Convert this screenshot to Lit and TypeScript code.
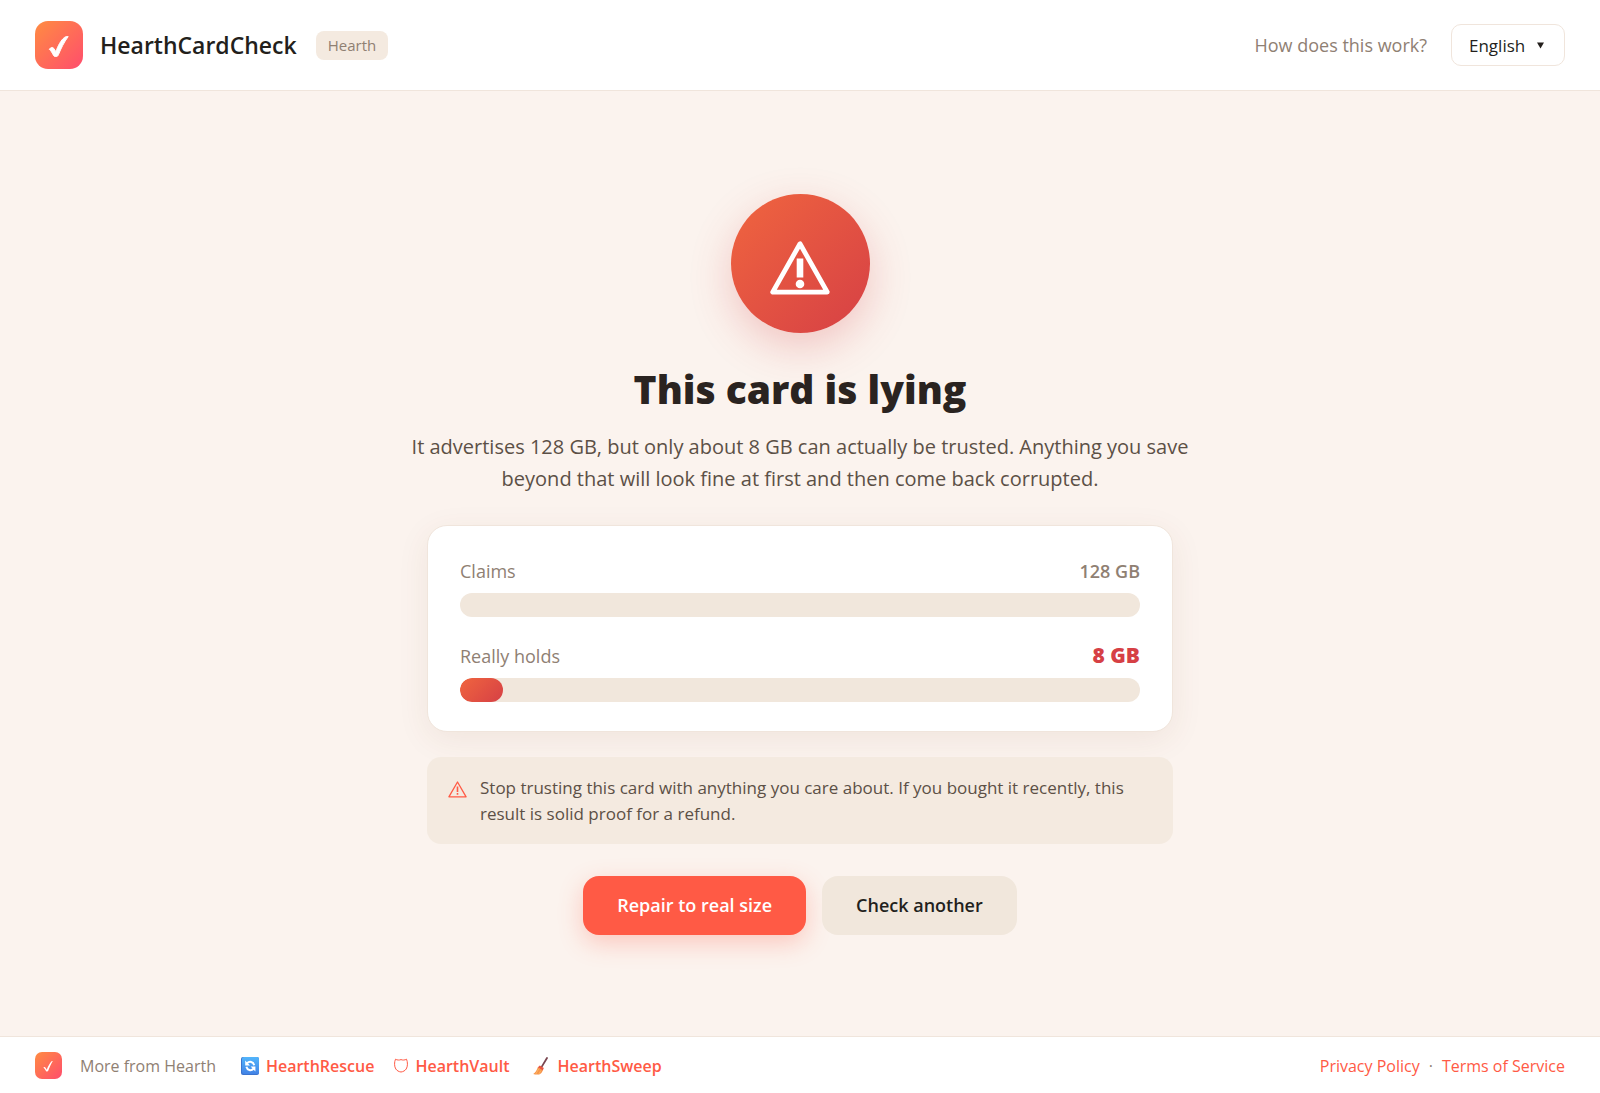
import { LitElement, html, css, svg } from "lit";
import { customElement, property, state } from "lit/decorators.js";
import { classMap } from "lit/directives/class-map.js";

@customElement("brand-mark")
class BrandMark extends LitElement {
  @property({ type: Boolean, reflect: true }) small = false;

  static styles = css`
    :host {
      display: block;
      flex: none;
      width: 48px;
      height: 48px;
      border-radius: 13px;
      background: linear-gradient(135deg, #ff8c42, #ff4d6d);
    }
    :host([small]) {
      width: 27px;
      height: 27px;
      border-radius: 7px;
    }
    svg {
      display: block;
      width: 100%;
      height: 100%;
      fill: #fff;
    }
  `;

  render() {
    return html`<svg viewBox="0 0 48 48" aria-hidden="true">
      ${this.small
        ? svg`<path d="M14.8 27.6c1.4-1.4 3-1.3 3.9.2l2.2 3.8c2.1-5.6 5-11 8-14.5.8-1 1.6-1.3 2.8-1.1-3.2 5.2-6 11.5-8.2 17.5-.6 1.5-3.200 1.600-4 .2-1.300-2.600-2.700-4.600-4.700-6.100z" />`
        : svg`<path d="M14.300 28.300c1.300-2 3.400-2.400 4.500-.9l2 3.300c2.200-5.800 5-11.500 8.600-14.200 1-.8 2.300-1.100 3.800-.9-4.200 5.600-7.300 12-9.700 17.900-.7 1.800-1.300 2-2.700 2-1.500 0-2.100-.4-2.700-1.800-1.100-2.300-2.200-3.900-3.800-5.400z" stroke="#fff" stroke-width="1" stroke-linejoin="round" />`}
    </svg>`;
  }
}

@customElement("capacity-row")
class CapacityRow extends LitElement {
  @property() label = "";
  @property() value = "";
  @property({ type: Number }) percent = 0;
  @property({ type: Boolean }) danger = false;

  static styles = css`
    :host {
      display: block;
    }
    .head {
      display: flex;
      justify-content: space-between;
      align-items: baseline;
      margin-bottom: 6px;
      font-size: 18px;
      line-height: 32px;
      color: #8f8073;
    }
    .value {
      font-weight: 600;
    }
    .value.danger {
      font-size: 21px;
      line-height: 28px;
      font-weight: 800;
      color: #d64045;
    }
    .track {
      height: 24px;
      border-radius: 12px;
      overflow: hidden;
      background: #f1e7dc;
    }
    .fill {
      height: 100%;
      border-radius: 12px;
      background: linear-gradient(135deg, #f0653f, #d64045);
    }
  `;

  render() {
    return html`
      <div class="head">
        <span>${this.label}</span>
        <span class=${classMap({ value: true, danger: this.danger })}>${this.value}</span>
      </div>
      <div class="track">
        ${this.percent ? html`<div class="fill" style="width:${this.percent}%"></div>` : ""}
      </div>
    `;
  }
}

const refreshIcon = html`<svg width="18" height="18" viewBox="0 0 18 18" aria-hidden="true">
  <defs>
    <linearGradient id="tile" x1="0" y1="0" x2="0" y2="1">
      <stop offset="0" stop-color="#52b5fb" />
      <stop offset="1" stop-color="#4283e6" />
    </linearGradient>
  </defs>
  <rect width="18" height="18" rx="2" fill="#3b74cf" />
  <rect x="1" width="17" height="17" rx="2" fill="url(#tile)" />
  <g fill="none" stroke="#fff" stroke-width="2">
    <path d="M6 6.2C8.5 3.8 12.3 4.6 13.2 8.2" />
    <path d="M12.6 11.8C10.1 14.2 6.3 13.4 5.4 9.8" />
  </g>
  <path d="M4.2 3.6v4.8h4.8zM14.4 14.4V9.6H9.6z" fill="#fff" />
</svg>`;

const shieldIcon = html`<svg width="14" height="15" viewBox="0 0 14 15" aria-hidden="true">
  <path
    d="M7 1.6C5.3 2.3 3.2 2.2 1.5 1.2 .2 4 .2 8.6 1.8 11c1.2 1.7 3 2.7 5.2 3 2.2-.3 4-1.3 5.2-3 1.6-2.4 1.6-7 .3-9.8C10.8 2.2 8.7 2.3 7 1.6z"
    fill="none"
    stroke="#ff5a45"
    stroke-width="1"
  />
</svg>`;

const broomIcon = html`<svg width="21" height="18" viewBox="0 0 21 18" aria-hidden="true">
  <path d="M17 1L11.8 9.6" stroke="#7a4650" stroke-width="1.8" stroke-linecap="round" />
  <path d="M9.8 8.6l4 2.5-1.1 2.6-5-3.2z" fill="#e8553f" />
  <path d="M7.9 10.2l4.9 3.3c-.8 2-1.8 3.3-3.6 3.9-2 .4-4 .2-6-.5 2.3-1.4 3.6-3.7 4.7-6.7z" fill="#f7934a" />
  <path d="M8.6 12l-2.8 5M10.8 13.5l-2 3.7" stroke="#fbc06a" stroke-width=".8" />
</svg>`;

@customElement("app-root")
class AppRoot extends LitElement {
  @state() private siblings = [
    { name: "HearthRescue", icon: refreshIcon },
    { name: "HearthVault", icon: shieldIcon },
    { name: "HearthSweep", icon: broomIcon },
  ];

  static styles = css`
    :host {
      display: flex;
      flex-direction: column;
      min-height: 100vh;
      background: #fbf3ee;
      color: #2a2320;
      font-family: "Open Sans", "Noto Sans", sans-serif;
      font-size: 16px;
    }
    * {
      box-sizing: border-box;
    }
    svg {
      display: block;
      flex: none;
    }
    a {
      color: #ff5a45;
      text-decoration: none;
    }
    header {
      display: flex;
      align-items: center;
      justify-content: space-between;
      padding: 21px 35px;
      background: #fff;
      border-bottom: 1px solid #f0e5dc;
    }
    .brand,
    .tools {
      display: flex;
      align-items: center;
    }
    .brand {
      gap: 17px;
    }
    .name {
      margin-right: 2px;
      font-size: 23px;
      font-weight: 600;
      line-height: 32px;
      color: #231f1c;
    }
    .pill {
      padding: 0 12px;
      border-radius: 8px;
      background: #f4eae0;
      color: #8f8073;
      font-size: 15px;
      line-height: 29px;
    }
    .tools {
      gap: 24px;
    }
    .help {
      color: #8f8073;
      font-size: 18px;
      line-height: 28px;
    }
    .language {
      display: grid;
      align-items: center;
    }
    .language select,
    .language svg {
      grid-area: 1 / 1;
    }
    .language svg {
      justify-self: end;
      margin-right: 21px;
      pointer-events: none;
    }
    select {
      appearance: none;
      height: 42px;
      padding: 0 38px 0 17px;
      border: 1px solid #f0e5dc;
      border-radius: 10px;
      background: #fff;
      color: #231f1c;
      font: inherit;
      font-size: 17px;
    }
    main {
      flex: 1;
      display: flex;
      flex-direction: column;
      align-items: center;
      justify-content: center;
      padding: 41px 24px 40px;
    }
    .alert {
      display: grid;
      place-items: center;
      width: 139px;
      height: 139px;
      padding-top: 10px;
      border-radius: 50%;
      background: linear-gradient(135deg, #f0653f, #d64045);
      box-shadow: 0 14px 40px rgba(214, 64, 69, 0.25);
    }
    h1 {
      margin: 30px 0 16px;
      font-size: 39px;
      font-weight: 800;
      line-height: 52px;
      text-align: center;
    }
    .summary {
      max-width: 800px;
      margin: 0 0 30px;
      font-size: 20px;
      line-height: 32px;
      text-align: center;
      color: #5c5046;
    }
    .panel {
      width: 100%;
      max-width: 746px;
    }
    .card {
      display: grid;
      gap: 23px;
      padding: 29px 32px;
      border: 1px solid #f0e5dc;
      border-radius: 20px;
      background: #fff;
      box-shadow: 0 8px 32px rgba(120, 70, 40, 0.08);
    }
    .note {
      display: flex;
      gap: 13px;
      margin-top: 25px;
      padding: 18px 21px 17px;
      border-radius: 14px;
      background: #f4eae0;
      color: #5c5046;
      font-size: 17px;
      line-height: 26px;
    }
    .note svg {
      margin-top: 6px;
    }
    .note p {
      margin: 0;
    }
    .actions {
      display: flex;
      flex-wrap: wrap;
      justify-content: center;
      gap: 16px;
      margin-top: 32px;
    }
    button {
      height: 59px;
      padding: 0 34px;
      border: 0;
      border-radius: 16px;
      background: #f1e7dc;
      color: #231f1c;
      font: inherit;
      font-size: 18px;
      font-weight: 600;
      cursor: pointer;
    }
    button.primary {
      background: #ff5a45;
      color: #fff;
      box-shadow: 0 8px 24px rgba(255, 90, 69, 0.28);
    }
    footer {
      display: flex;
      align-items: center;
      justify-content: space-between;
      padding: 15px 35px 14px;
      background: #fff;
      border-top: 1px solid #f0e5dc;
      color: #8f8073;
      line-height: 24px;
    }
    .more,
    .siblings,
    .siblings a,
    .legal {
      display: flex;
      align-items: center;
    }
    .more {
      gap: 18px;
    }
    .siblings {
      gap: 20px;
      margin-left: 7px;
    }
    .siblings a {
      gap: 7px;
      font-weight: 600;
    }
    .legal {
      gap: 9px;
    }
  `;

  render() {
    return html`
      <header>
        <div class="brand">
          <brand-mark></brand-mark>
          <span class="name">HearthCardCheck</span>
          <span class="pill">Hearth</span>
        </div>
        <div class="tools">
          <a class="help" href="#how">How does this work?</a>
          <div class="language">
            <select aria-label="Language">
              <option>English</option>
            </select>
            <svg width="7" height="7" viewBox="0 0 7 7" aria-hidden="true">
              <path d="M0 .5h7L3.5 6.5z" fill="#231f1c" />
            </svg>
          </div>
        </div>
      </header>

      <main>
        <div class="alert">
          <svg width="60" height="54" viewBox="0 0 60 54" aria-hidden="true">
            <path d="M30 2.8L2.7 51.1H57.3z" fill="none" stroke="#fff" stroke-width="4.8" stroke-linejoin="round" />
            <path d="M26.7 17.5h6.6v19h-6.6z" fill="#fff" />
            <circle cx="30" cy="43" r="4.3" fill="#fff" />
          </svg>
        </div>
        <h1>This card is lying</h1>
        <p class="summary">
          It advertises 128 GB, but only about 8 GB can actually be trusted. Anything you save beyond
          that will look fine at first and then come back corrupted.
        </p>
        <section class="panel card">
          <capacity-row label="Claims" value="128 GB"></capacity-row>
          <capacity-row label="Really holds" value="8 GB" .percent=${(8 / 128) * 100} danger></capacity-row>
        </section>
        <div class="panel note">
          <svg width="19" height="17" viewBox="0 0 19 17" aria-hidden="true">
            <path d="M9.5 1L.9 15.8H18.1z" fill="none" stroke="#ff5a45" stroke-width="1.3" stroke-linejoin="round" />
            <path d="M8.7 5.5h1.6v5.5H8.7zM8.7 12h1.6v1.8H8.7z" fill="#ff5a45" />
          </svg>
          <p>
            Stop trusting this card with anything you care about. If you bought it recently, this
            result is solid proof for a refund.
          </p>
        </div>
        <div class="actions">
          <button class="primary" type="button">Repair to real size</button>
          <button type="button">Check another</button>
        </div>
      </main>

      <footer>
        <div class="more">
          <brand-mark small></brand-mark>
          <span>More from Hearth</span>
          <nav class="siblings" aria-label="More apps">
            ${this.siblings.map((s) => html`<a href="#${s.name}">${s.icon}${s.name}</a>`)}
          </nav>
        </div>
        <nav class="legal" aria-label="Legal">
          <a href="#privacy">Privacy Policy</a><span>·</span><a href="#terms">Terms of Service</a>
        </nav>
      </footer>
    `;
  }
}
